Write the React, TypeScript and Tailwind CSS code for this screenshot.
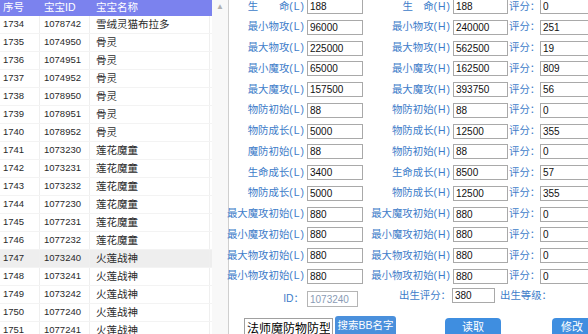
import React from "react";

const pets: [string, string, string][] = [
  ["1734", "1078742", "雪绒灵猫布拉多"],
  ["1735", "1074950", "骨灵"],
  ["1736", "1074951", "骨灵"],
  ["1737", "1074952", "骨灵"],
  ["1738", "1078950", "骨灵"],
  ["1739", "1078951", "骨灵"],
  ["1740", "1078952", "骨灵"],
  ["1741", "1073230", "莲花魔童"],
  ["1742", "1073231", "莲花魔童"],
  ["1743", "1073232", "莲花魔童"],
  ["1744", "1077230", "莲花魔童"],
  ["1745", "1077231", "莲花魔童"],
  ["1746", "1077232", "莲花魔童"],
  ["1747", "1073240", "火莲战神"],
  ["1748", "1073241", "火莲战神"],
  ["1749", "1073242", "火莲战神"],
  ["1750", "1077240", "火莲战神"],
  ["1751", "1077241", "火莲战神"],
];

// [左标签, L值, 右标签, H值, 评分]
const stats: [string, string, string, string, string][] = [
  ["生　　命", "188", "生　命", "188", "0"],
  ["最小物攻", "96000", "最小物攻", "240000", "251"],
  ["最大物攻", "225000", "最大物攻", "562500", "19"],
  ["最小魔攻", "65000", "最小魔攻", "162500", "809"],
  ["最大魔攻", "157500", "最大魔攻", "393750", "56"],
  ["物防初始", "88", "物防初始", "88", "0"],
  ["物防成长", "5000", "物防成长", "12500", "355"],
  ["魔防初始", "88", "物防初始", "88", "0"],
  ["生命成长", "3400", "生命成长", "8500", "57"],
  ["物防成长", "5000", "物防成长", "12500", "355"],
  ["最大魔攻初始", "880", "最大魔攻初始", "880", "0"],
  ["最小魔攻初始", "880", "最小魔攻初始", "880", "0"],
  ["最大物攻初始", "880", "最大物攻初始", "880", "0"],
  ["最小物攻初始", "880", "最小物攻初始", "880", "0"],
];

const Field = ({ value, className }: { value: string; className: string }) => (
  <input
    readOnly
    value={value}
    className={`h-[15px] shrink-0 border border-[#a9a9a9] bg-white px-[2px] text-[10px] leading-none text-[#111] outline-none font-['Liberation_Sans',sans-serif] ${className}`}
  />
);

const Label = ({ text, tag, className }: { text: string; tag: string; className: string }) => (
  <div className={`flex h-[15px] shrink-0 items-center justify-end whitespace-nowrap pr-[2px] text-[10.4px] text-[#3d7cc9] ${className}`}>
    <span>{text}</span>
    <span className="tracking-[1px]">({tag})</span>
  </div>
);

export default function App() {
  return (
    <div className="flex h-[334px] w-[588px] overflow-hidden bg-white font-['Liberation_Sans','Noto_Sans_CJK_SC',sans-serif]">
      {/* 宝宝列表 */}
      <div className="flex w-[212px] shrink-0 flex-col">
        <div className="flex h-[16px] shrink-0 items-center bg-[#7b82ee] text-[10.5px] text-white">
          <div className="w-[40px] pl-[3px]">序号</div>
          <div className="w-[50px] pl-[4px]">宝宝ID</div>
          <div className="pl-[6px]">宝宝名称</div>
        </div>
        {pets.map(([no, id, name]) => (
          <div
            key={no}
            className={`flex h-[18px] shrink-0 items-center border-b border-[#f3f3f3] text-[#2a2a2a] ${no === "1747" ? "bg-[#eeeeee]" : ""}`}
          >
            <div className="flex h-full w-[40px] items-center border-r border-[#efefef] pl-[3px] text-[9.5px]">{no}</div>
            <div className="flex h-full w-[50px] items-center border-r border-[#efefef] pl-[4px] text-[9.5px]">{id}</div>
            <div className="flex h-full w-[120px] items-center border-r border-[#efefef] pl-[6px] text-[10.5px]">{name}</div>
          </div>
        ))}
      </div>

      {/* 滚动条 */}
      <div className="flex w-[16px] shrink-0 flex-col items-center bg-[#f8f8f8]">
        <div className="pt-[1px] text-[8px] leading-[12px] text-[#b0b0b0]">▲</div>
      </div>
      <div className="w-px shrink-0 bg-[#cfcfcf]" />

      {/* 属性面板 */}
      <div className="flex flex-1 flex-col">
        <div className="mt-[-1px] flex flex-col">
          {stats.map(([ll, lv, rl, rv, score], i) => (
            <div key={i} className="flex h-[20.75px] shrink-0 items-start">
              <Label text={ll} tag="L" className="w-[78px]" />
              <Field value={lv} className="w-[56px]" />
              <Label text={rl} tag="H" className="w-[90px]" />
              <Field value={rv} className="w-[55px]" />
              <div className="flex h-[15px] w-[32px] shrink-0 items-center whitespace-nowrap pl-[1px] text-[10.4px] text-[#3d7cc9]">
                评分：
              </div>
              <Field value={score} className="w-[60px]" />
            </div>
          ))}
        </div>

        <div className="flex h-[20px] shrink-0 items-start">
          <div className="mt-[1.5px] flex h-[16px] w-[78px] shrink-0 items-center justify-end pr-[3px] text-[10.4px] text-[#3d7cc9]">
            ID：
          </div>
          <input
            readOnly
            value="1073240"
            className="mt-[1.5px] h-[16px] w-[51px] shrink-0 border border-[#b5b5b5] bg-white px-[2px] text-[10px] text-[#8a9bb5] outline-none"
          />
          <div className="mt-[-1.5px] flex h-[15px] w-[94px] shrink-0 items-center justify-end pr-[1px] text-[10.4px] text-[#3d7cc9]">
            出生评分：
          </div>
          <Field value="380" className="mt-[-1.5px] w-[43px]" />
          <div className="mt-[-1.5px] flex h-[15px] shrink-0 items-center pl-[5px] text-[10.4px] text-[#3d7cc9]">
            出生等级：
          </div>
        </div>

        <div className="mt-[8.5px] flex items-start">
          <input
            readOnly
            value="法师魔防物防型"
            className="ml-[15px] h-[19px] w-[89px] shrink-0 border border-[#a0a0a0] bg-white px-[2px] text-[12px] text-black outline-none"
          />
          <button className="ml-[2px] mt-[-2px] h-[20px] w-[61px] shrink-0 rounded-[3px] bg-[#4a90dc] text-[10.5px] text-white">
            搜索BB名字
          </button>
          <button className="ml-[49px] flex h-[24px] w-[56px] shrink-0 items-start justify-center rounded-[4px] bg-[#3f8ee0] pt-[4px] text-[11px] leading-[11px] text-white">
            读取
          </button>
          <button className="ml-[51px] flex h-[24px] w-[40px] shrink-0 items-start justify-center rounded-[4px] bg-[#3f8ee0] pt-[4px] text-[11px] leading-[11px] text-white">
            修改
          </button>
        </div>
      </div>
    </div>
  );
}
